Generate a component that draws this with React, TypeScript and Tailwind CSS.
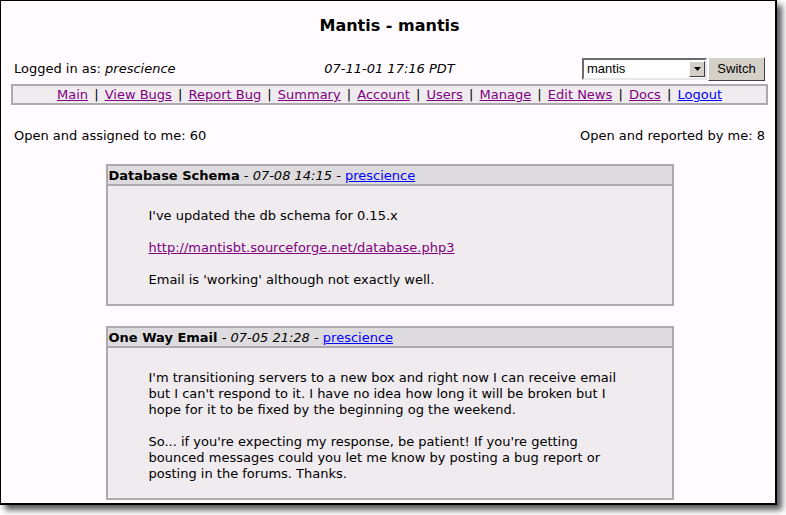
import React from "react";

const font = { fontFamily: '"DejaVu Sans", Verdana, sans-serif' };

function NewsBox({ title, date, author, children }: { title: string; date: string; author: string; children: React.ReactNode }) {
    return (
        <div className="mx-auto w-[568px] border-2 border-[#adaaad] bg-[#efebef]">
            <div className="h-[20px] border-b-2 border-[#adaaad] bg-[#dedbde] px-[1px] pt-[2px] leading-4">
                <span className="font-bold">{title}</span>
                <span className="italic"> - {date} - </span>
                <a className="text-[#0000ff] underline">{author}</a>
            </div>
            <div className="px-[41px] pt-[22px] pb-[16px] leading-4">{children}</div>
        </div>
    );
}

export default function App() {
    const links = ["Main", "View Bugs", "Report Bug", "Summary", "Account", "Users", "Manage", "Edit News", "Docs", "Logout"];
    return (
        <div className="relative h-[515px] w-[786px] overflow-hidden bg-white text-[13px] text-black" style={font}>
            <div className="h-[505px] w-[777px] overflow-hidden border-t border-l border-r-2 border-b-2 border-black bg-[#fffbff] shadow-[5px_5px_6px_rgba(0,0,0,0.65)]">
                <div className="pl-[10px] pr-[7px]">
                    <h1 className="mt-[15px] text-center text-[16px] font-bold leading-5">Mantis - mantis</h1>

                    <div className="mt-[21px] grid h-[24px] grid-cols-[1fr_auto_1fr] items-center px-[3px]">
                        <div>
                            Logged in as: <span className="italic">prescience</span>
                        </div>
                        <div className="italic">07-11-01 17:16 PDT</div>
                        <div className="flex items-center justify-end gap-[1px]">
                            <div
                                className="flex h-[22px] w-[125px] items-center border-2 border-t-[#6b6b6b] border-l-[#6b6b6b] border-r-[#e8e8e8] border-b-[#e8e8e8] bg-white"
                                style={{ fontFamily: '"Liberation Sans", Arial, sans-serif' }}
                            >
                                <span className="flex-1 pl-[3px] text-[13px]">mantis</span>
                                <div className="flex h-[16px] w-[16px] items-center justify-center border border-t-white border-l-white border-r-[#404040] border-b-[#404040] bg-[#d4d0c8]">
                                    <svg width="7" height="4" viewBox="0 0 7 4">
                                        <path d="M0 0h7L3.5 4z" fill="#000" />
                                    </svg>
                                </div>
                            </div>
                            <div
                                className="flex h-[24px] w-[57px] items-center justify-center border border-t-white border-l-white border-r-[#404040] border-b-[#404040] bg-[#d4d0c8] text-[13px]"
                                style={{ fontFamily: '"Liberation Sans", Arial, sans-serif' }}
                            >
                                Switch
                            </div>
                        </div>
                    </div>

                    <div className="mt-[3px] h-[21px] border-2 border-[#adaaad] bg-[#efebef] text-center leading-[17px]">
                        {links.map((l, i) => (
                            <React.Fragment key={l}>
                                {i > 0 && <span className="mx-[2px]"> | </span>}
                                <a className={l === "Logout" ? "text-[#0000ff] underline" : "text-[#800080] underline"}>{l}</a>
                            </React.Fragment>
                        ))}
                    </div>

                    <div className="mt-[23px] flex justify-between px-[3px] leading-4">
                        <span>Open and assigned to me: 60</span>
                        <span>Open and reported by me: 8</span>
                    </div>

                    <div className="mt-[20px]">
                        <NewsBox title="Database Schema" date="07-08 14:15" author="prescience">
                            <p>I've updated the db schema for 0.15.x</p>
                            <p className="mt-4">
                                <a className="text-[#800080] underline">http://mantisbt.sourceforge.net/database.php3</a>
                            </p>
                            <p className="mt-4">Email is 'working' although not exactly well.</p>
                        </NewsBox>
                    </div>

                    <div className="mt-[20px]">
                        <NewsBox title="One Way Email" date="07-05 21:28" author="prescience">
                            <p>
                                I'm transitioning servers to a new box and right now I can receive email
                                <br />
                                but I can't respond to it. I have no idea how long it will be broken but I
                                <br />
                                hope for it to be fixed by the beginning og the weekend.
                            </p>
                            <p className="mt-4">
                                So... if you're expecting my response, be patient! If you're getting
                                <br />
                                bounced messages could you let me know by posting a bug report or
                                <br />
                                posting in the forums. Thanks.
                            </p>
                        </NewsBox>
                    </div>
                </div>
            </div>
        </div>
    );
}
